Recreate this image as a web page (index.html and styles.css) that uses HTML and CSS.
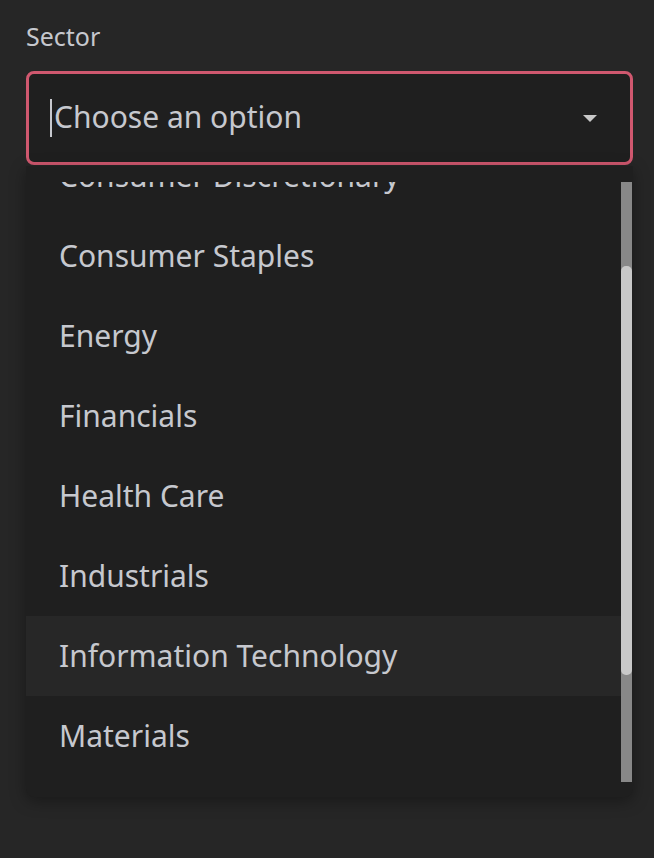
FILE: index.html
```html
<!DOCTYPE html>
<html>
<head>
<meta charset="utf-8">
<link rel="stylesheet" href="styles.css">
</head>
<body>
<div class="field">
  <div class="label">Sector</div>
  <div class="select">
    <span class="caret"></span><span class="placeholder">Choose an option</span>
    <svg class="arrow" width="14" height="7" viewBox="0 0 14 7"><path d="M0 0 L14 0 L7 7 Z" fill="#c8c8c8"/></svg>
  </div>
  <div class="menu">
    <div class="viewport">
      <ul class="options">
        <li>Consumer Discretionary</li>
        <li>Consumer Staples</li>
        <li>Energy</li>
        <li>Financials</li>
        <li>Health Care</li>
        <li>Industrials</li>
        <li class="active">Information Technology</li>
        <li>Materials</li>
      </ul>
    </div>
    <div class="scrollbar"><div class="thumb"></div></div>
  </div>
</div>
</body>
</html>
```
FILE: styles.css
```css
html, body {
  margin: 0;
  padding: 0;
  background: #262626;
  height: 100%;
}
body {
  font-family: "Noto Sans", "Open Sans", sans-serif;
  color: #c6c8ce;
}
.field {
  padding: 18px 21px 0 26px;
}
.label {
  font-size: 25px;
  line-height: 36px;
  height: 36px;
  margin-bottom: 17px;
}
.select {
  box-sizing: border-box;
  height: 94px;
  border: 3px solid #d0586f;
  border-radius: 8px;
  background: #1f1f1f;
  display: flex;
  align-items: center;
  padding-left: 21px;
  padding-right: 33px;
}
.caret {
  width: 2px;
  height: 38px;
  background: #c6c8ce;
  margin-right: 2px;
}
.placeholder {
  font-size: 30px;
  line-height: 40px;
  flex: 1;
  margin-top: -2px;
}
.arrow {
  display: block;
}
.menu {
  margin-top: 1px;
  height: 631px;
  background: #1f1f1f;
  border-radius: 0 0 8px 8px;
  box-shadow: 0 4px 16px rgba(0,0,0,0.35);
  box-sizing: border-box;
  padding: 16px 0 15px 0;
  display: flex;
}
.viewport {
  flex: 1;
  overflow: hidden;
  height: 600px;
}
.options {
  list-style: none;
  margin: -46px 0 0 0;
  padding: 0;
}
.options li {
  height: 80px;
  display: flex;
  align-items: center;
  padding-left: 33px;
  padding-bottom: 2px;
  box-sizing: border-box;
  font-size: 30px;
}
.options li.active {
  background: #272727;
}
.scrollbar {
  width: 11px;
  height: 600px;
  background: #888888;
  margin-right: 1px;
}
.thumb {
  margin-top: 84px;
  height: 409px;
  background: #c8c8c8;
  border-radius: 5px;
}
```
